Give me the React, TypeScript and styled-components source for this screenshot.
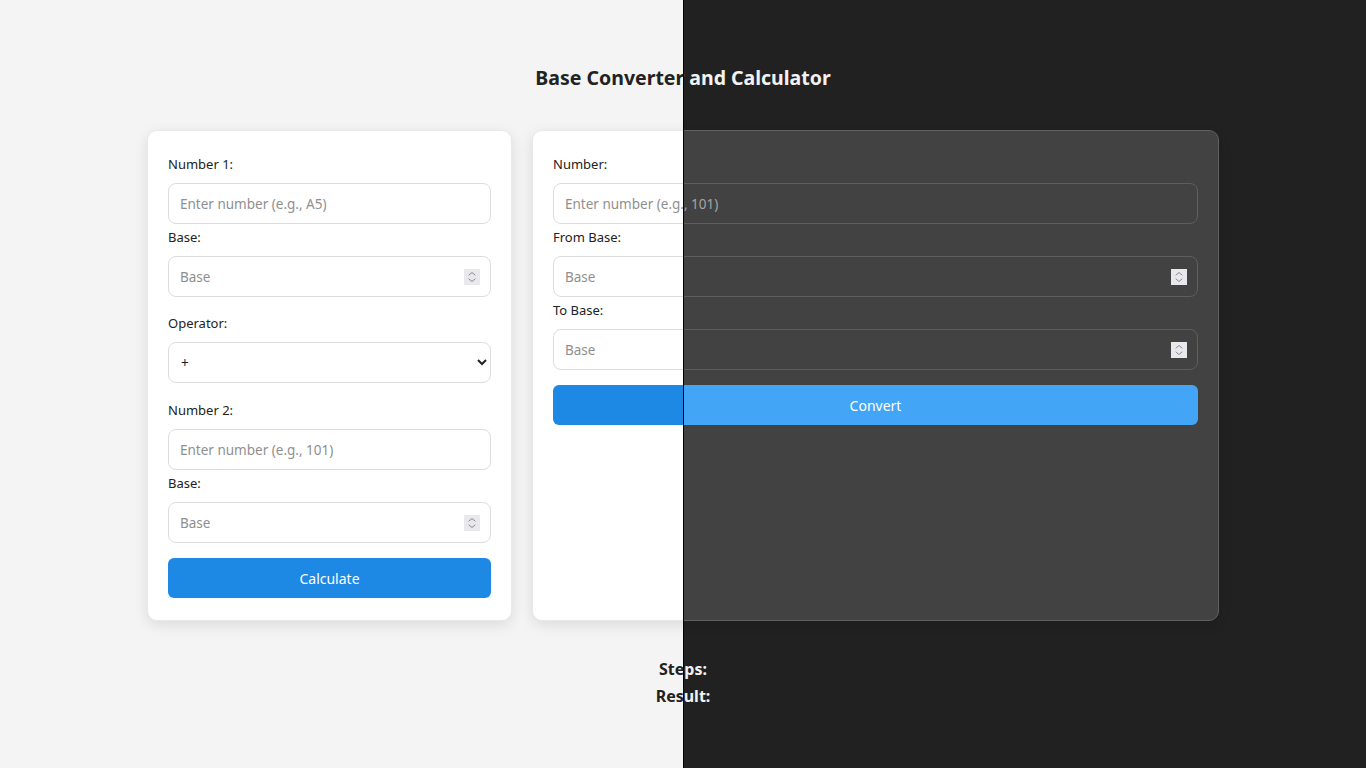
import React from 'react';
import styled, { createGlobalStyle, ThemeProvider } from 'styled-components';

const light = {
  background: '#f4f4f4',
  card: '#ffffff',
  cardBorder: '#e9e9e9',
  text: '#222222',
  inputBg: '#ffffff',
  inputBorder: '#dddddd',
  placeholder: '#8f8f8f',
  button: '#1e88e5',
  buttonText: '#ffffff',
};

const dark = {
  background: '#212121',
  card: '#424242',
  cardBorder: '#616161',
  text: '#f2f2f2',
  inputBg: '#424242',
  inputBorder: '#5e5e5e',
  placeholder: '#a6a6a6',
  button: '#42a5f5',
  buttonText: '#ffffff',
};

type Theme = typeof light;

const GlobalStyle = createGlobalStyle`
  html, body {
    margin: 0;
    padding: 0;
  }
  body {
    font-family: "Noto Sans", "Open Sans", sans-serif;
  }
  * {
    box-sizing: border-box;
  }
`;

const Stage = styled.div`
  position: relative;
  width: 100%;
  min-height: 768px;
  overflow: hidden;
`;

// the dark copy of the page, shown only on the right half
const DarkLayer = styled.div`
  position: absolute;
  inset: 0;
  clip-path: inset(0 0 0 683px);
`;

const Divider = styled.div`
  position: absolute;
  top: 0;
  bottom: 0;
  left: 683px;
  width: 1px;
  background: #000;
`;

const PageWrap = styled.div<{ theme: Theme }>`
  min-height: 768px;
  background: ${({ theme }) => theme.background};
  color: ${({ theme }) => theme.text};
  padding-top: 63px;
  display: flex;
  flex-direction: column;
  align-items: center;
`;

const Title = styled.h1`
  margin: 0 0 37px;
  font-size: 19.5px;
  line-height: 30px;
  font-weight: 700;
`;

const Columns = styled.div`
  display: grid;
  grid-template-columns: 365px 687px;
  gap: 20px;
`;

const Card = styled.div<{ theme: Theme }>`
  background: ${({ theme }) => theme.card};
  border: 1px solid ${({ theme }) => theme.cardBorder};
  border-radius: 10px;
  box-shadow: 0 4px 14px rgba(0, 0, 0, 0.1);
  padding: 20px 20px 22px;
  display: flex;
  flex-direction: column;
`;

const Group = styled.div<{ $spaced?: boolean }>`
  display: flex;
  flex-direction: column;
  margin: ${({ $spaced }) => ($spaced ? '13px 0 14px' : '0')};
`;

const Label = styled.label`
  font-size: 13px;
  line-height: 20px;
  margin: 3px 0 9px;
`;

const Field = styled.input<{ theme: Theme }>`
  display: block;
  height: 41px;
  width: 100%;
  padding: 0 11px;
  border: 1px solid ${({ theme }) => theme.inputBorder};
  border-radius: 8px;
  background: ${({ theme }) => theme.inputBg};
  color: ${({ theme }) => theme.text};
  font-family: inherit;
  font-size: 13.5px;
  -moz-appearance: textfield;

  &::placeholder {
    color: ${({ theme }) => theme.placeholder};
  }
  &::-webkit-inner-spin-button,
  &::-webkit-outer-spin-button {
    -webkit-appearance: none;
    margin: 0;
  }
`;

const NumberWrap = styled.div`
  position: relative;
`;

const Spinner = styled.span`
  position: absolute;
  right: 11px;
  top: 50%;
  width: 16px;
  height: 16px;
  margin-top: -8px;
  background: #e9e9ed;
  display: flex;
  align-items: center;
  justify-content: center;
  pointer-events: none;
`;

const Select = styled.select<{ theme: Theme }>`
  height: 41px;
  width: 100%;
  padding: 0 8px;
  border: 1px solid ${({ theme }) => theme.inputBorder};
  border-radius: 8px;
  background: ${({ theme }) => theme.inputBg};
  color: ${({ theme }) => theme.text};
  font-family: inherit;
  font-size: 13.5px;
`;

const Button = styled.button<{ theme: Theme }>`
  margin-top: 15px;
  height: 40px;
  width: 100%;
  border: none;
  border-radius: 6px;
  background: ${({ theme }) => theme.button};
  color: ${({ theme }) => theme.buttonText};
  font-family: inherit;
  font-size: 14px;
  cursor: pointer;
`;

const Output = styled.div`
  margin-top: 35px;
  display: flex;
  flex-direction: column;
  align-items: center;
`;

const OutputLine = styled.div`
  font-size: 16px;
  font-weight: 700;
  line-height: 27px;
`;

const NumberField: React.FC<{ placeholder: string }> = ({ placeholder }) => (
  <NumberWrap>
    <Field type="number" placeholder={placeholder} />
    <Spinner>
      <svg width="8" height="12" viewBox="0 0 8 12" fill="none" stroke="#8a8a8f" strokeWidth="1" strokeLinecap="round" strokeLinejoin="round">
        <path d="M1 4 L4 1.5 L7 4" />
        <path d="M1 8 L4 10.5 L7 8" />
      </svg>
    </Spinner>
  </NumberWrap>
);

const Page: React.FC = () => (
  <PageWrap>
    <Title>Base Converter and Calculator</Title>
    <Columns>
      <Card>
        <Group>
          <Label>Number 1:</Label>
          <Field type="text" placeholder="Enter number (e.g., A5)" />
          <Label>Base:</Label>
          <NumberField placeholder="Base" />
        </Group>
        <Group $spaced>
          <Label>Operator:</Label>
          <Select defaultValue="+">
            <option value="+">+</option>
            <option value="-">-</option>
            <option value="*">*</option>
            <option value="/">/</option>
          </Select>
        </Group>
        <Group>
          <Label>Number 2:</Label>
          <Field type="text" placeholder="Enter number (e.g., 101)" />
          <Label>Base:</Label>
          <NumberField placeholder="Base" />
        </Group>
        <Button>Calculate</Button>
      </Card>
      <Card>
        <Group>
          <Label>Number:</Label>
          <Field type="text" placeholder="Enter number (e.g., 101)" />
          <Label>From Base:</Label>
          <NumberField placeholder="Base" />
          <Label>To Base:</Label>
          <NumberField placeholder="Base" />
        </Group>
        <Button>Convert</Button>
      </Card>
    </Columns>
    <Output>
      <OutputLine>Steps:</OutputLine>
      <OutputLine>Result:</OutputLine>
    </Output>
  </PageWrap>
);

const App: React.FC = () => (
  <>
    <GlobalStyle />
    <Stage>
      <ThemeProvider theme={light}>
        <Page />
      </ThemeProvider>
      <DarkLayer>
        <ThemeProvider theme={dark}>
          <Page />
        </ThemeProvider>
      </DarkLayer>
      <Divider />
    </Stage>
  </>
);

export default App;
